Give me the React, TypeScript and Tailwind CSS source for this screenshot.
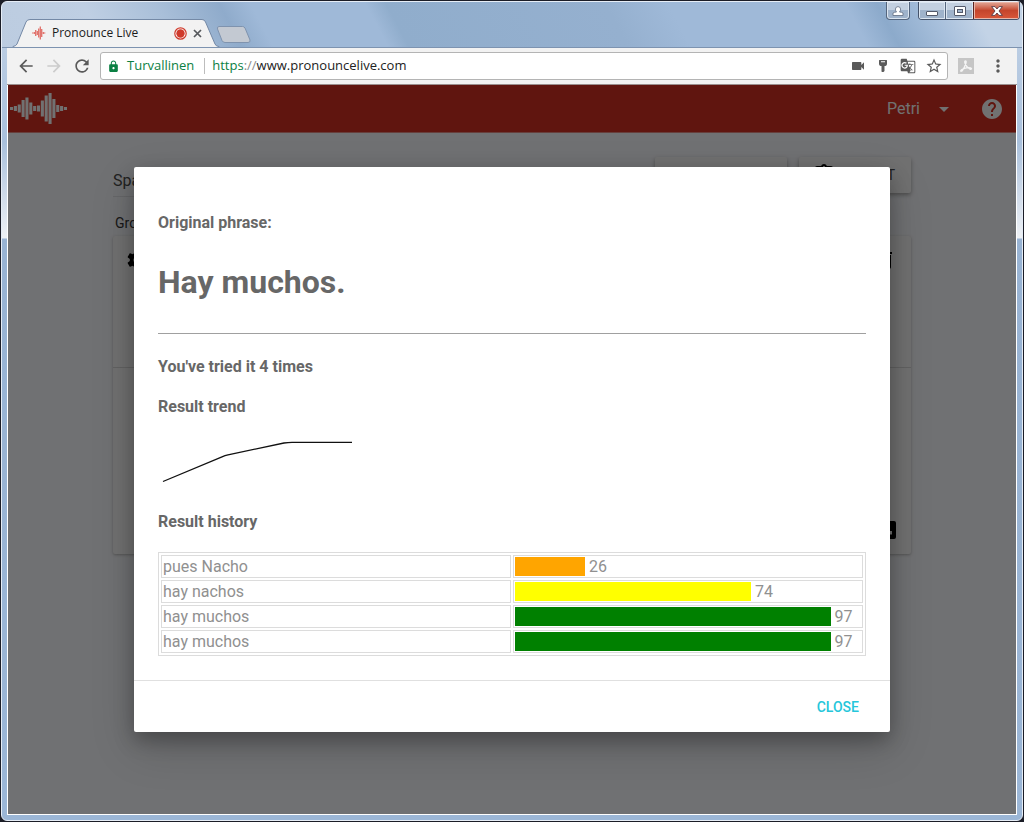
import {
  MdArrowBack,
  MdArrowDropDown,
  MdArrowForward,
  MdAssignment,
  MdDelete,
  MdGTranslate,
  MdHelp,
  MdLock,
  MdMoreVert,
  MdRefresh,
  MdSettings,
  MdStarBorder,
  MdVideocam,
} from 'react-icons/md'

const attempts = [
  { phrase: 'pues Nacho', score: 26, bar: 20.2, color: 'bg-[#ffa500]' },
  { phrase: 'hay nachos', score: 74, bar: 68.2, color: 'bg-[#ffff00]' },
  { phrase: 'hay muchos', score: 97, bar: 91.2, color: 'bg-[#008000]' },
  { phrase: 'hay muchos', score: 97, bar: 91.2, color: 'bg-[#008000]' },
]

// Bar heights of the sound wave logo, left to right
const wave = [3, 5, 8, 17, 22, 12, 5, 6, 16, 26, 31, 19, 7, 5, 3]

function WaveLogo({ className }: { className: string }) {
  return (
    <svg viewBox="0 0 58 32" className={className} fill="currentColor" aria-hidden="true">
      {wave.map((h, i) => (
        <rect key={i} x={i * 3.85} y={15.5 - h / 2} width="3.1" height={h} />
      ))}
    </svg>
  )
}

function TabIcon() {
  return (
    <svg viewBox="0 0 14 14" className="h-[14px] w-[14px]" fill="#dc5850" aria-hidden="true">
      {[1, 2, 6, 4, 9, 13, 8, 2, 1].map((h, i) => (
        <rect key={i} x={i * 1.5 + 0.2} y={7 - h / 2} width="1.1" height={h} />
      ))}
    </svg>
  )
}

function WindowButtons() {
  return (
    <div className="absolute top-0 right-[2px] flex items-start gap-2">
      <button
        aria-label="User"
        className="flex h-[18px] w-6 items-center justify-center rounded-b border border-t-0 border-[#54657d] bg-linear-to-b from-[#c3d0e0] from-50% to-[#9fb3cb] to-50% shadow-[inset_0_0_0_1px_#dbe5f0]"
      >
        <svg viewBox="0 0 12 10" className="h-[10px] w-3" fill="#fff" stroke="#5f6c80" strokeWidth="0.8">
          <path d="M1 9.5V7Q2.500 6 4.500 6Q3.300 4.500 3.400 3Q3.800 0.600 6 0.600T8.600 3Q8.700 4.500 7.500 6Q9.500 6 11 7V9.500Z" />
        </svg>
      </button>
      <div className="flex h-[18px] overflow-hidden rounded-b border border-t-0 border-[#45536a]">
        <button
          aria-label="Minimize"
          className="flex w-[27px] items-center justify-center border-r border-[#54657d] bg-linear-to-b from-[#c3d0e0] from-50% to-[#9fb3cb] to-50% shadow-[inset_0_0_0_1px_#dbe5f0]"
        >
          <svg viewBox="0 0 14 12" className="h-3 w-[14px]">
            <rect x="1.5" y="6.5" width="11" height="4" rx="0.5" fill="#fff" stroke="#535a6b" />
          </svg>
        </button>
        <button
          aria-label="Maximize"
          className="flex w-[27px] items-center justify-center bg-linear-to-b from-[#c3d0e0] from-50% to-[#9fb3cb] to-50% shadow-[inset_0_0_0_1px_#dbe5f0]"
        >
          <svg viewBox="0 0 12 10" className="h-[10px] w-3" fill="#fff" stroke="#535a6b">
            <rect x="0.5" y="0.5" width="11" height="9" rx="0.5" />
            <rect x="3.5" y="3.5" width="5" height="3" fill="#9fb3cb" />
          </svg>
        </button>
        <button
          aria-label="Close window"
          className="flex w-[46px] items-center justify-center border-l border-[#5b2420] bg-linear-to-b from-[#dd9684] from-10% via-[#c4452c] via-50% to-[#d9573a] shadow-[inset_0_0_0_1px_#e8b5a8]"
        >
          <svg viewBox="0 0 12 10" className="h-[10px] w-3">
            <path
              d="M0.6 0.6H4L6 3L8 0.6H11.4L8 5L11.4 9.4H8L6 7L4 9.4H0.6L4 5Z"
              fill="#fff"
              stroke="#5a3a44"
              strokeWidth="0.9"
            />
          </svg>
        </button>
      </div>
    </div>
  )
}

function TitleBar() {
  return (
    <div className="relative flex h-[46px] shrink-0 items-end rounded-t-md border-b border-[#7d93b0] bg-[linear-gradient(62deg,#bccce0_0%,#bfcfe3_10%,#a9bfd9_17%,#8fabcb_23%,#9fb9d8_26%,#9fb9d8_37%,#90adcc_39%,#95b0cf_60%,#9fb9d8_66%,#9fb9d8_83%,#8caacb_86%,#a8c0dc_91%,#c3d3e6_95%)] pl-[10px]">
      <div className="relative flex h-[29px] w-[208px] items-center">
        <svg viewBox="0 0 208 29" preserveAspectRatio="none" className="absolute inset-0 h-full w-full">
          <path
            d="M1 28.5Q4 28 5 26L14 4Q15 1.5 18 1.5H190Q192.500 1.5 193.500 4L203 26Q204 28.500 207 28.500V30H1Z"
            fill="#f2f2f2"
            stroke="#7489a6"
          />
        </svg>
        <div className="relative flex w-full items-center pt-px pr-[18px] pl-5">
          <TabIcon />
          <span className="ml-[6px] flex-1 font-['Open_Sans',sans-serif] text-xs text-[#1c1c1c]">
            Pronounce Live
          </span>
          <svg viewBox="0 0 13 13" className="h-[13px] w-[13px]">
            <circle cx="6.500" cy="6.500" r="5.700" fill="#fff" stroke="#cf3a2b" strokeWidth="1.200" />
            <circle cx="6.500" cy="6.500" r="4.200" fill="#cf3a2b" />
          </svg>
          <button aria-label="Close tab" className="ml-[6px]">
            <svg viewBox="0 0 9 9" className="h-[9px] w-[9px]" stroke="#55585c" strokeWidth="1.700">
              <path d="M1 1L8 8M8 1L1 8" />
            </svg>
          </button>
        </div>
      </div>
      <button aria-label="New tab" className="-ml-[3px] mb-1">
        <svg viewBox="0 0 34 17" className="h-[17px] w-[34px]">
          <path
            d="M2 0.5H25.500Q27 0.500 28 2L33 14Q33.500 16.500 31 16.500H8Q6 16.500 5 14.500L0.500 3Q0 0.500 2 0.500Z"
            fill="#c3c9d2"
            stroke="#7f93ae"
          />
        </svg>
      </button>
      <WindowButtons />
    </div>
  )
}

function Toolbar() {
  return (
    <div className="flex h-[37px] shrink-0 items-center border-b border-[#9a8f8e] bg-[#f2f2f2] px-[9px] text-[#5a5a5a]">
      <button aria-label="Back" className="mr-2">
        <MdArrowBack className="h-5 w-5" />
      </button>
      <button aria-label="Forward" className="mr-2 text-[#cccccc]">
        <MdArrowForward className="h-5 w-5" />
      </button>
      <button aria-label="Reload">
        <MdRefresh className="h-5 w-5" />
      </button>
      <div className="ml-2 flex h-7 flex-1 items-center rounded-[3px] border border-[#b4b4b4] bg-white pr-1 pl-[6px] font-['Open_Sans',sans-serif] text-[13px]">
        <MdLock className="h-[13px] w-[13px] text-[#0b8043]" />
        <span className="ml-[7px] text-[#0b8043]">Turvallinen</span>
        <span className="mr-[7px] ml-[10px] h-4 w-px bg-[#bdbdbd]" />
        <a href="https://www.pronouncelive.com" className="flex-1 text-[#222]">
          <span className="text-[#0b8043]">https</span>
          <span className="text-[#8a8a8a]">://</span>
          www.pronouncelive.com
        </a>
        <div className="flex items-center gap-[9px]">
          <button aria-label="Camera">
            <MdVideocam className="h-4 w-4" />
          </button>
          <button aria-label="Saved password">
            <svg viewBox="0 0 16 16" className="h-4 w-4" fill="currentColor">
              <path
                fillRule="evenodd"
                d="M4 2.500Q4 2 4.500 2H11.500Q12 2 12 2.500V6Q12 7.500 10.500 8H9.500V13L8.500 14H7L6.500 13.500V8H5.500Q4 7.500 4 6ZM6 3.200V4.300H10V3.200Z"
              />
            </svg>
          </button>
          <button aria-label="Translate">
            <MdGTranslate className="h-4 w-4" />
          </button>
          <button aria-label="Bookmark">
            <MdStarBorder className="h-[18px] w-[18px]" />
          </button>
        </div>
      </div>
      <button aria-label="Acrobat" className="ml-[10px] bg-[#c6c6c6] p-px">
        <svg viewBox="0 0 14 14" className="h-[14px] w-[14px]" fill="none" stroke="#f5f5f5" strokeWidth="1.300">
          <path d="M6.500 1.800Q5.300 1.800 6 4.200Q7.200 8 11 10.200Q12.500 10.700 12.500 9.500Q12 8.300 7.500 8.800Q3 9.700 1.800 11.500Q1.500 12.800 3 12Q5.500 9 7 4Q7.500 1.800 6.500 1.800Z" />
        </svg>
      </button>
      <button aria-label="Menu" className="ml-[14px]">
        <MdMoreVert className="h-5 w-5" />
      </button>
    </div>
  )
}

function Page() {
  return (
    <>
      <header className="flex h-12 items-center border-b border-[#cf7f78] bg-[#c02a1e] pr-3 pl-[2px] text-[#e2e2e2]">
        <WaveLogo className="h-8 w-[58px]" />
        <button className="ml-auto flex items-center gap-3 text-base">
          Petri
          <MdArrowDropDown className="h-6 w-6" />
        </button>
        <button aria-label="Help" className="ml-6">
          <MdHelp className="h-6 w-6" />
        </button>
      </header>
      <main className="mx-auto w-[798px] max-w-full pt-6 text-[#444]">
        <div className="flex items-start gap-3">
          <div className="h-10 flex-1 border-b border-[#cdced2] pt-3 text-base">Spanish</div>
          <button className="ml-4 h-9 w-[132px] rounded-xs bg-[#e3e3e3] text-sm shadow-[0_2px_4px_#9a9a9a]">
            NEW
          </button>
          <button className="flex h-9 w-[112px] items-center justify-between rounded-xs bg-[#e3e3e3] pr-4 pl-[13px] text-sm shadow-[0_2px_4px_#9a9a9a]">
            <MdAssignment className="h-6 w-6 text-black" />
            TEXT
          </button>
        </div>
        <h2 className="mt-4 ml-[2px] text-sm text-[#333]">Group</h2>
        <section className="mt-[3px] flex h-[318px] flex-col rounded-xs bg-[#e2e2e2] text-black shadow-[0_1px_3px_#a8a8a8]">
          <div className="flex h-[132px] items-start justify-between border-b border-[#c4c4c4] px-3 pt-3">
            <MdSettings className="h-6 w-6" />
            <MdDelete className="mr-[2px] h-6 w-6" />
          </div>
          <div className="flex flex-1 items-end justify-end px-3 pb-3">
            <svg viewBox="0 0 24 24" className="h-6 w-6" fill="currentColor">
              <path
                fillRule="evenodd"
                d="M5 3H19Q21 3 21 5V19Q21 21 19 21H5Q3 21 3 19V5Q3 3 5 3ZM13 13V16.500H17V13Z"
              />
            </svg>
          </div>
        </section>
      </main>
    </>
  )
}

function ResultDialog() {
  return (
    <div className="absolute inset-0 flex items-start justify-center bg-black/50 pt-[82px]">
      <div
        role="dialog"
        aria-label="Results"
        className="w-3/4 rounded-xs bg-white text-base leading-6 text-[#676767] shadow-[0_8px_20px_0_rgba(0,0,0,0.28),0_16px_45px_0_rgba(0,0,0,0.16)]"
      >
        <div className="px-6 pt-11 pb-6">
          <h4 className="font-bold">Original phrase:</h4>
          <h1 className="mt-[23px] text-[32px] leading-12 font-bold">Hay muchos.</h1>
          <hr className="mt-[27px] border-[#a0a0a0]" />
          <h4 className="mt-[21px] font-bold">You&apos;ve tried it 4 times</h4>
          <h4 className="mt-4 font-bold">Result trend</h4>
          <svg viewBox="0 0 200 50" className="mt-4 mb-[25px] h-[50px] w-[200px]" fill="none" stroke="#111" strokeWidth="1.300">
            <path d="M5 46.500L64 21.800Q67 20.500 70 19.800L126 8Q130 7.300 134 7.300H194" />
          </svg>
          <h4 className="font-bold">Result history</h4>
          <table className="mt-[18px] w-full table-fixed border-separate border-spacing-[2px] border border-[#dcdcdc] leading-[19px] text-[#909090]">
            <tbody>
              {attempts.map((attempt, i) => (
                <tr key={i}>
                  <td className="border border-[#dcdcdc] p-px">{attempt.phrase}</td>
                  <td className="border border-[#dcdcdc] p-px">
                    <div className="flex gap-1">
                      <div className={`h-[19px] ${attempt.color}`} style={{ width: `${attempt.bar}%` }} />
                      {attempt.score}
                    </div>
                  </td>
                </tr>
              ))}
            </tbody>
          </table>
        </div>
        <div className="flex h-[52px] items-center justify-end border-t border-[#e0e0e0] px-[31px]">
          <button className="text-sm font-medium text-[#26c6da]">CLOSE</button>
        </div>
      </div>
    </div>
  )
}

export default function App() {
  return (
    <div className="flex min-h-screen flex-col bg-[#1b1d27] p-px font-[Roboto,sans-serif]">
      <div className="flex flex-1 flex-col rounded-md border border-[#e6edf6] bg-[linear-gradient(#c3d3e6_0,#a9c0dc_140px,#eef1f5_236px,#98b3d3_237px,#9bb6d6_100%)]">
        <TitleBar />
        <div className="mx-[5px] mb-[5px] flex flex-1 flex-col">
          <Toolbar />
          <div className="relative flex-1 overflow-hidden border border-t-0 border-white">
            <div className="absolute inset-0 bg-[#e1e2e6]">
              <Page />
            </div>
            <ResultDialog />
          </div>
        </div>
      </div>
    </div>
  )
}
